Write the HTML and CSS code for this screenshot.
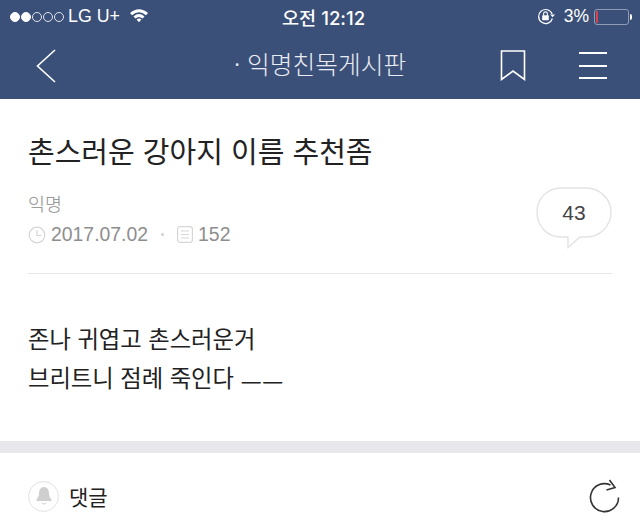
FILE: index.html
```html
<!DOCTYPE html>
<html lang="ko">
<head>
    <meta charset="UTF-8">
    <meta name="viewport" content="width=device-width, initial-scale=1.0">
    <title>익명친목게시판</title>
    <link rel="stylesheet" href="styles.css">
</head>
<body>
    <header class="top">
        <div class="status">
            <div class="status-left">
                <span class="dot on"></span><span class="dot on"></span><span class="dot"></span><span class="dot"></span><span class="dot"></span>
                <span class="carrier">LG U+</span>
                <svg class="wifi" width="20" height="15" viewBox="0 0 20 15">
                    <path d="M1 5 Q10 -2.5 19 5 L17 7.2 Q10 1.5 3 7.2 Z" fill="#fff"/>
                    <path d="M4.5 8.4 Q10 3.8 15.5 8.4 L13.6 10.4 Q10 7.4 6.4 10.4 Z" fill="#fff"/>
                    <path d="M7.6 11.5 Q10 9.6 12.4 11.5 L10 14.2 Z" fill="#fff"/>
                </svg>
            </div>
            <div class="clock">오전 12:12</div>
            <div class="status-right">
                <svg class="lock" width="19" height="17" viewBox="0 0 19 17">
                    <path d="M15.4 10.5 A7 7 0 1 1 15.2 6" fill="none" stroke="#fff" stroke-width="1.2"/>
                    <path d="M13.2 6.4 L18 6.4 L15.6 9.2 Z" fill="#fff"/>
                    <rect x="5.2" y="7.2" width="6.6" height="5" rx="0.6" fill="#fff"/>
                    <path d="M6.6 7.4 V5.8 A1.9 1.9 0 0 1 10.4 5.8 V7.4" fill="none" stroke="#fff" stroke-width="1.1"/>
                </svg>
                <span class="battery-text">3%</span>
                <div class="battery"><div class="battery-level"></div></div>
                <div class="battery-tip"></div>
            </div>
        </div>
        <nav class="nav">
            <svg class="back" width="22" height="36" viewBox="0 0 22 36">
                <path d="M20 2 L2.5 18 L20 34" fill="none" stroke="#fff" stroke-width="1.6"/>
            </svg>
            <div class="nav-title">· 익명친목게시판</div>
            <svg class="bookmark" width="26" height="31" viewBox="0 0 26 31">
                <path d="M1.5 1 H24.5 V29.5 L13 21 L1.5 29.5 Z" fill="none" stroke="#fff" stroke-width="1.6"/>
            </svg>
            <div class="menu"><span></span><span></span><span></span></div>
        </nav>
    </header>

    <main>
        <section class="post">
            <h1 class="post-title">촌스러운 강아지 이름 추천좀</h1>
            <div class="post-meta">
                <div class="meta-left">
                    <div class="author">익명</div>
                    <div class="meta-row">
                        <svg width="18" height="18" viewBox="0 0 18 18">
                            <circle cx="9" cy="9" r="7.8" fill="none" stroke="#d6d6d6" stroke-width="1.2"/>
                            <path d="M9 4 V9.5 H13.5" fill="none" stroke="#d6d6d6" stroke-width="1.2"/>
                        </svg>
                        <span class="date">2017.07.02</span>
                        <span class="sep"></span>
                        <svg width="16" height="17" viewBox="0 0 16 17">
                            <rect x="0.6" y="0.6" width="14.8" height="15.8" rx="2.5" fill="none" stroke="#d6d6d6" stroke-width="1.2"/>
                            <path d="M4 5 H12 M4 8.5 H12 M4 12 H12" stroke="#d6d6d6" stroke-width="1.2"/>
                        </svg>
                        <span class="views">152</span>
                    </div>
                </div>
                <div class="bubble">
                    <svg class="bubble-shape" width="76" height="64" viewBox="0 0 76 64">
                        <path d="M25 1 H50 C64 1 75 12 75 25 C75 39 64 50 50 50 H44 L32 60.5 V50 H25 C11 50 1 39 1 25 C1 12 11 1 25 1 Z" fill="#fff" stroke="#e3e3e3" stroke-width="1.4"/>
                    </svg>
                    <span class="bubble-count">43</span>
                </div>
            </div>
        </section>
        <div class="post-body">
            <p>존나 귀엽고 촌스러운거</p>
            <p>브리트니 점례 죽인다 <span class="dash">ㅡㅡ</span></p>
        </div>
        <div class="divider"></div>
        <section class="comments">
            <div class="comments-left">
                <div class="bell">
                    <svg width="18" height="20" viewBox="0 0 18 20">
                        <path d="M9 1 C12.6 1 13.8 4 14 7.5 C14.2 10.5 15 12 16.5 13.5 V15 H1.5 V13.5 C3 12 3.8 10.5 4 7.5 C4.2 4 5.4 1 9 1 Z" fill="#cfcfcf"/>
                        <path d="M6.8 17 Q9 19.4 11.2 17" fill="none" stroke="#cfcfcf" stroke-width="1"/>
                    </svg>
                </div>
                <span class="comments-label">댓글</span>
            </div>
            <svg class="refresh" width="32" height="34" viewBox="0 0 32 34">
                <path d="M29.5 18.5 A14 14 0 1 1 21.5 6" fill="none" stroke="#333" stroke-width="1.6"/>
                <path d="M20.5 1 L26 8.5 L17.5 11" fill="none" stroke="#333" stroke-width="1.6"/>
            </svg>
        </section>
    </main>
</body>
</html>
```

FILE: styles.css
```css
* {
    box-sizing: border-box;
}

html, body {
    height: 100%;
}

body {
    margin: 0;
    padding: 0;
    background-color: #fff;
    font-family: "Liberation Sans", "Noto Sans CJK KR", sans-serif;
    overflow: hidden;
}

.top {
    background-color: #3b5078;
    color: #fff;
    height: 99px;
}

.status {
    display: flex;
    align-items: center;
    justify-content: space-between;
    height: 32px;
    padding: 1px 0 0 10px;
    position: relative;
}

.status-left, .status-right {
    display: flex;
    align-items: center;
}

.dot {
    width: 10px;
    height: 10px;
    margin-right: 1px;
    border-radius: 50%;
    border: 1px solid #dfe3ec;
}

.dot.on {
    background-color: #fff;
    border-color: #fff;
}

.carrier {
    margin-left: 3px;
    font-size: 17.8px;
}

.wifi {
    margin-left: 9px;
    margin-top: -3px;
}

.clock {
    position: absolute;
    left: 282px;
    font-size: 18.6px;
    font-family: Inter, "Noto Sans CJK KR", sans-serif;
    font-weight: 500;
}

.status-right {
    margin-right: 8px;
}

.battery-text {
    margin-left: 8px;
    font-size: 17.5px;
}

.battery {
    width: 35px;
    height: 16px;
    margin-left: 5px;
    border: 1px solid #8f9bb3;
    border-radius: 3px;
    padding: 1px;
}

.battery-level {
    width: 2px;
    height: 100%;
    background-color: #d8434f;
}

.battery-tip {
    width: 2px;
    height: 6px;
    margin-left: 1px;
    background-color: #fff;
    border-radius: 0 2px 2px 0;
}

.nav {
    display: flex;
    align-items: center;
    height: 67px;
    padding-left: 35px;
    position: relative;
}

.nav-title {
    position: absolute;
    left: 234px;
    top: 13px;
    font-size: 24.7px;
    line-height: 36px;
    color: #e9ecf2;
    font-family: "Noto Sans CJK KR", sans-serif;
    font-weight: 300;
}

.bookmark {
    margin-left: auto;
}

.menu {
    display: flex;
    flex-direction: column;
    justify-content: space-between;
    width: 28px;
    height: 27px;
    margin-left: 53px;
    margin-right: 33px;
}

.menu span {
    height: 2px;
    background-color: #fff;
}

.post {
    margin: 0 28px;
    padding-top: 30px;
    height: 175px;
    border-bottom: 1px solid #e6e6e6;
}

.post-title {
    margin: 0;
    font-size: 29px;
    line-height: 42px;
    font-weight: 400;
    color: #222;
    font-family: "Noto Sans CJK KR", sans-serif;
}

.post-meta {
    display: flex;
    justify-content: space-between;
    margin-top: 16px;
}

.author {
    margin-top: 4px;
    font-size: 18.5px;
    line-height: 24px;
    color: #8c8c8c;
    font-family: "Noto Sans CJK KR", sans-serif;
    font-weight: 300;
}

.meta-row {
    display: flex;
    align-items: center;
    gap: 5px;
    margin-top: 8px;
    font-size: 19.4px;
    color: #8e8e8e;
}

.sep {
    width: 3px;
    height: 3px;
    margin: 0 8px 0 8px;
    border-radius: 50%;
    background-color: #d0d0d0;
}

.bubble {
    position: relative;
    width: 76px;
    height: 64px;
    margin-left: auto;
}

.bubble-count {
    position: absolute;
    top: 14px;
    left: 0;
    width: 100%;
    text-align: center;
    font-size: 21px;
    color: #444;
}

.post-body {
    height: 167px;
    padding: 45px 28px 0;
    font-size: 23.3px;
    line-height: 39px;
    color: #222;
    font-family: "Noto Sans CJK KR", sans-serif;
}

.post-body p {
    margin: 0;
}

.dash {
    vertical-align: -5px;
    line-height: 1;
}

.divider {
    height: 12px;
    background-color: #e8e8ec;
}

.comments {
    display: flex;
    align-items: center;
    justify-content: space-between;
    padding: 26px 19px 0 28px;
}

.comments-left {
    display: flex;
    align-items: center;
    gap: 10px;
}

.bell {
    display: flex;
    align-items: center;
    justify-content: center;
    width: 31px;
    height: 31px;
    border: 1px solid #e2e2e2;
    border-radius: 50%;
}

.comments-label {
    font-size: 21px;
    color: #222;
    font-family: "Noto Sans CJK KR", sans-serif;
}
```
